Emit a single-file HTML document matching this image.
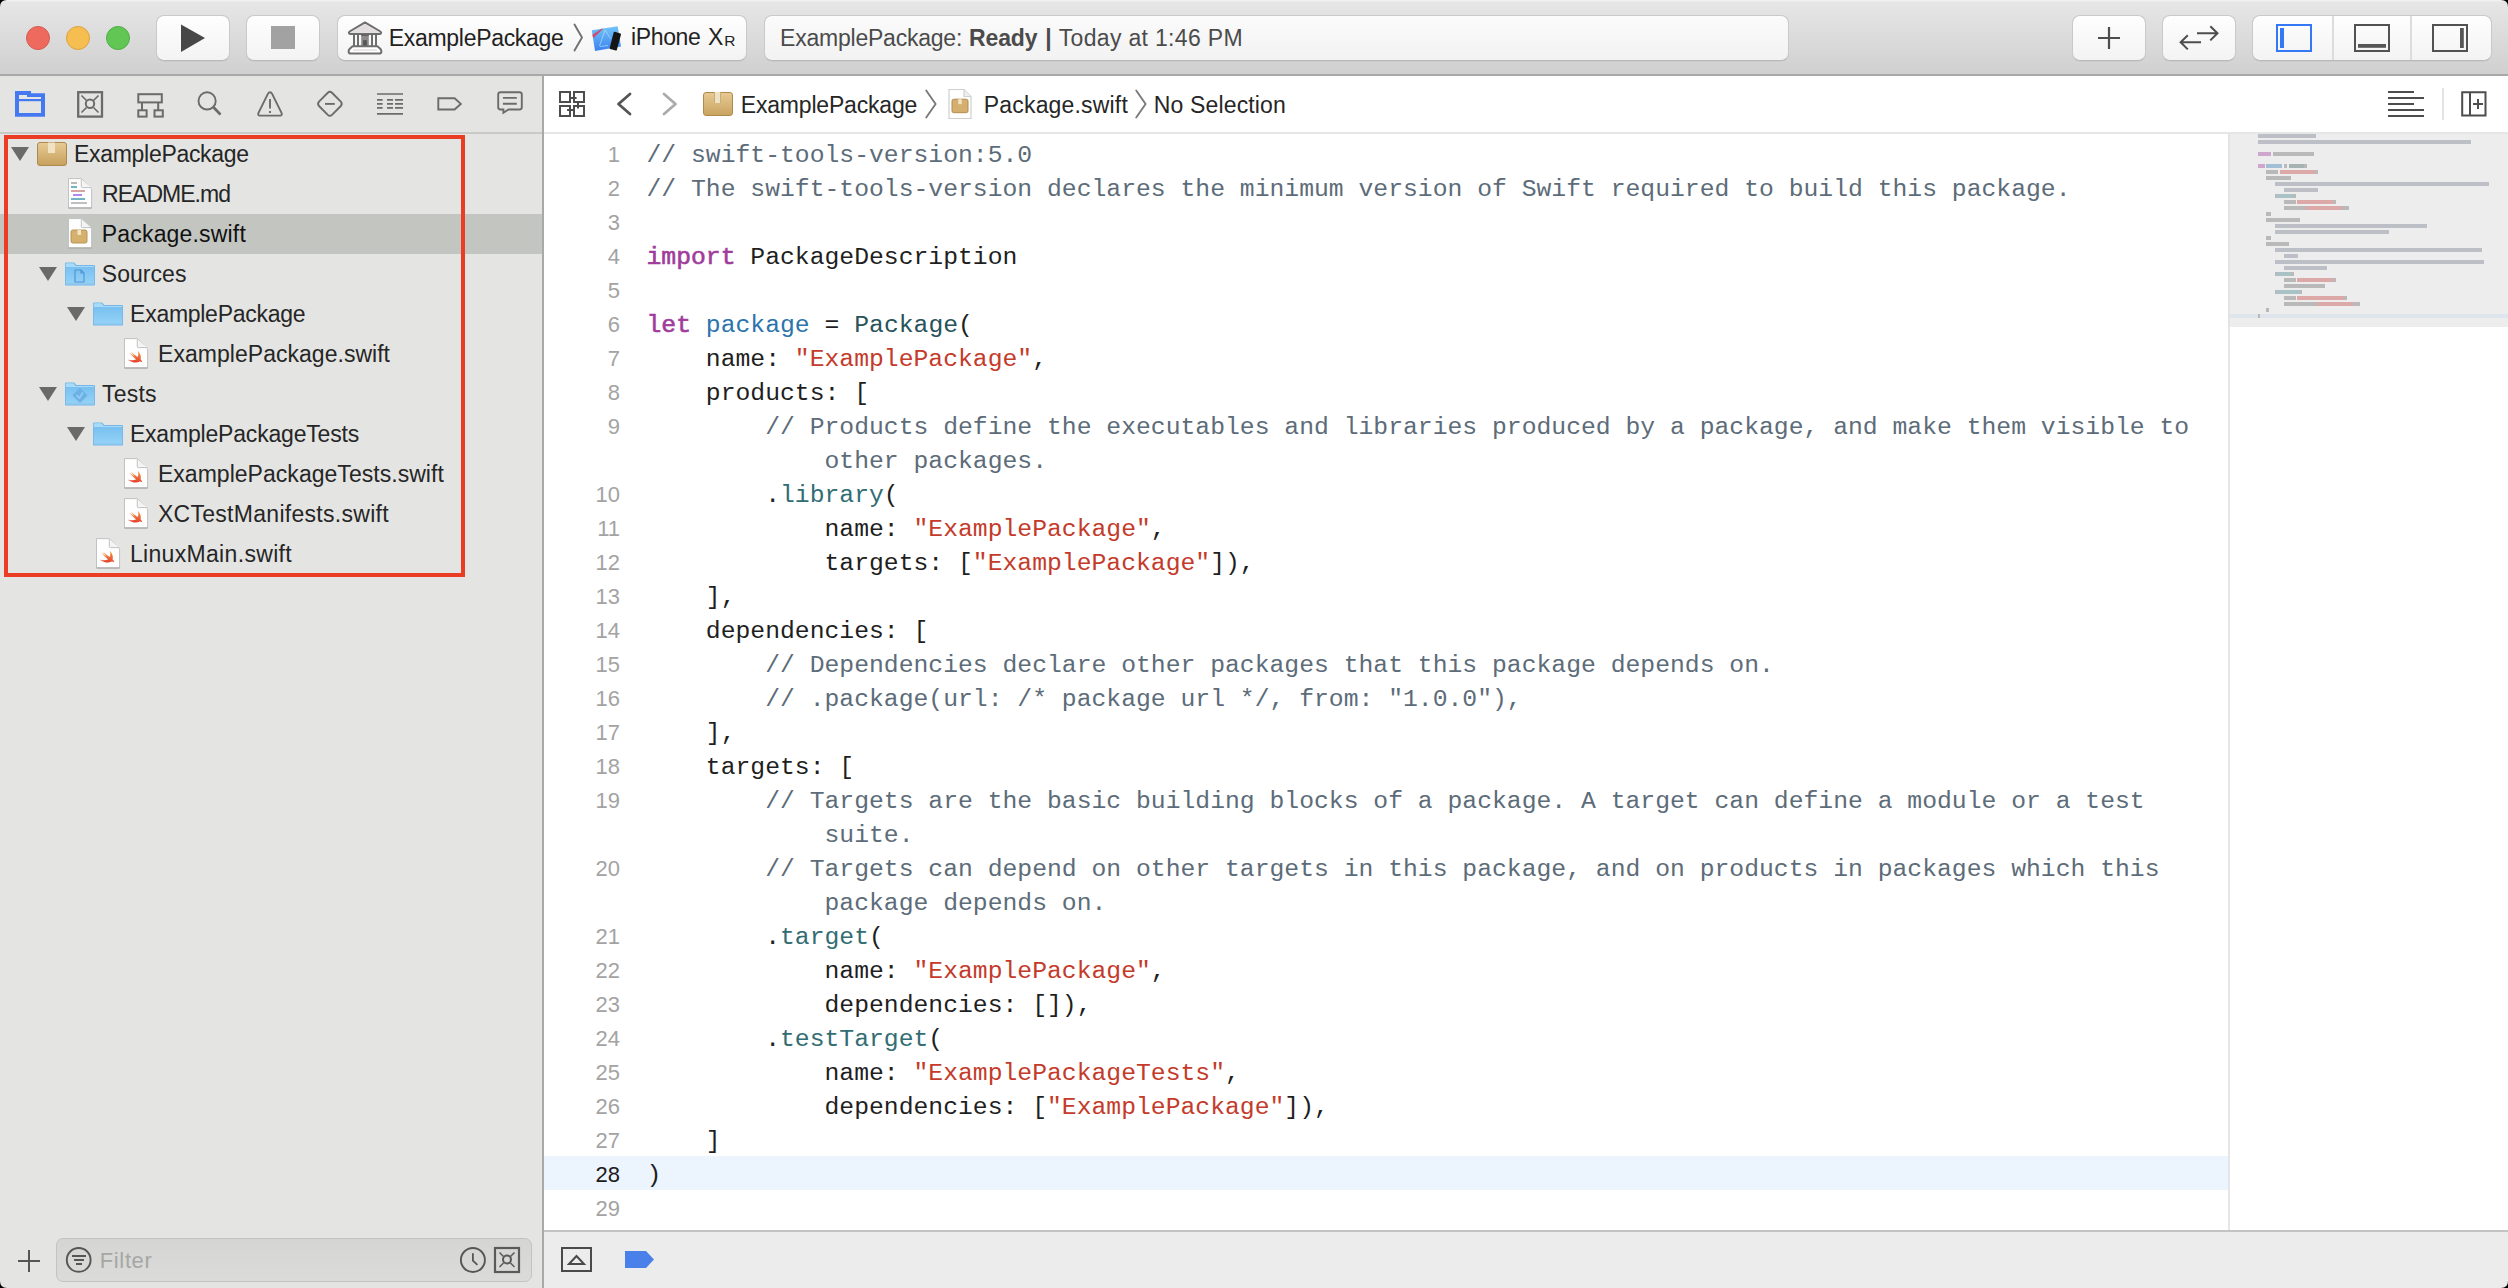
<!DOCTYPE html>
<html><head><meta charset="utf-8">
<style>
*{margin:0;padding:0;box-sizing:border-box}
html,body{width:2508px;height:1288px;overflow:hidden;background:#fff}
body{position:relative;font-family:"Liberation Sans",sans-serif;color:#262626}
.a{position:absolute}
/* toolbar */
#tb{position:absolute;left:0;top:0;width:2508px;height:76px;background:linear-gradient(#f5f5f5 0px,#e6e6e6 2px,#d0d0d0 74px);border-bottom:2px solid #a9a9a9}
.tl{position:absolute;width:24px;height:24px;border-radius:50%;top:26px}
.btn{position:absolute;top:15px;height:45.5px;border-radius:8px;background:linear-gradient(#fefefe,#f3f3f3);border:1px solid #c9c9c9;border-bottom-color:#b9b9b9;box-shadow:0 0.5px 0.5px rgba(0,0,0,0.08)}
.sans{position:absolute;white-space:nowrap;font-family:"Liberation Sans",sans-serif;line-height:1}
/* navigator */
#nav{position:absolute;left:0;top:76px;width:542px;height:1212px;background:#e4e4e2}
#navsep{position:absolute;left:542px;top:76px;width:2px;height:1212px;background:#a9a9a9}
#navtabs{position:absolute;left:0;top:76px;width:542px;height:58px;border-bottom:2px solid #c9c9c7}
.row{position:absolute;left:0;width:542px;height:40px}
.sel{background:#c3c5c0}
.nt{position:absolute;white-space:nowrap;font-size:23px;line-height:1;color:#262626}
.tri{position:absolute;width:0;height:0;border-left:9px solid transparent;border-right:9px solid transparent;border-top:14px solid #6b6b6b}
/* editor */
#jump{position:absolute;left:544px;top:76px;width:1964px;height:58px;background:#fff;border-bottom:2px solid #e6e6e6}
#editor{position:absolute;left:544px;top:134px;width:1964px;height:1096px;background:#fff}
.cr{position:absolute;white-space:pre;font-family:"Liberation Mono",monospace;font-size:24.72px;line-height:34px;height:34px;padding-top:2px}
.ln{position:absolute;left:560px;width:60px;text-align:right;font-family:"Liberation Sans",sans-serif;font-size:22px;line-height:34px;height:34px;color:#a3a3a3;padding-top:1.5px}
.ln.cur{color:#1a1a1a}
.com{color:#5d6c79}.kw{color:#a03c9b;-webkit-text-stroke:0.6px #a03c9b}.str{color:#c43b2b}.decl{color:#2c74ac}.type{color:#28535a}.fn{color:#326d74}.pl{color:#1f1f1f}
#curline{position:absolute;left:544px;top:1156px;width:1684px;height:34px;background:#ecf4fe}
#mmbg{position:absolute;left:2228px;top:134px;width:280px;height:193px;background:#ededed;border-left:2px solid #e3e3e3}
#mmcur{position:absolute;left:2230px;top:314px;width:278px;height:4px;background:#dfe5ed}
#mm i{position:absolute;height:4px;display:block}
#edsep{position:absolute;left:2228px;top:327px;width:2px;height:903px;background:#e6e6e6}
/* bottom */
#bot{position:absolute;left:544px;top:1230px;width:1964px;height:58px;background:#ececec;border-top:2px solid #c3c3c3}
#filter{position:absolute;left:56px;top:1238px;width:476px;height:44px;border-radius:7px;background:linear-gradient(#d5d5d3,#dbdbd9);border:1px solid #c3c3c1}
.ico{position:absolute;overflow:visible}
.corner{position:absolute;width:8px;height:8px}
</style></head><body>

<!-- toolbar -->
<div id="tb"></div>
<div class="tl" style="left:26px;background:#ee6a5f;border:1px solid #d65b4f"></div>
<div class="tl" style="left:66px;background:#f6be50;border:1px solid #dca23c"></div>
<div class="tl" style="left:106px;background:#62c655;border:1px solid #4fae44"></div>

<div class="btn" style="left:156px;width:74px"></div>
<svg class="ico" style="left:156px;top:16px" width="74" height="44"><path d="M25 8.5 L49 22 L25 36 Z" fill="#474747"/></svg>
<div class="btn" style="left:246px;width:74px"></div>
<div class="a" style="left:271px;top:26px;width:24px;height:23px;background:#a2a2a2"></div>
<div class="btn" style="left:337px;width:410px"></div>
<!-- bank icon -->
<svg class="ico" style="left:340px;top:15px" width="60" height="45" viewBox="0 0 60 45">
 <path d="M25 7.4 L39.6 16 Q41.6 17.3 41 18.2 Q40.6 18.9 39.4 18.9 H10.6 Q9.4 18.9 9 18.2 Q8.4 17.3 10.4 16 Z" fill="#e6e2e4" stroke="#6e6e6e" stroke-width="2" stroke-linejoin="round"/>
 <path d="M12.2 17.6 L25 10.2 L37.8 17.6 Z" fill="#e2dee0"/>
 <g fill="#6e6e6e"><rect x="13" y="19" width="2" height="13.2"/><rect x="17" y="19" width="2" height="13.2"/><rect x="31" y="19" width="2" height="13.2"/><rect x="35" y="19" width="2" height="13.2"/></g>
 <rect x="21.2" y="19.2" width="7.6" height="13.5" fill="#8d898b"/>
 <rect x="21.2" y="19.2" width="7.6" height="1.6" fill="#5e5e5e"/>
 <rect x="23.2" y="25.2" width="3.6" height="7.5" fill="#555"/>
 <path d="M12.6 31.2 H37.4 L40.2 33.8 Q41.4 35 41.4 36.4 Q41.4 38.5 39.3 38.5 H10.7 Q8.6 38.5 8.6 36.4 Q8.6 35 9.8 33.8 Z" fill="#fff" stroke="#6e6e6e" stroke-width="2" stroke-linejoin="round"/>
 <rect x="13" y="34.2" width="24" height="1.6" fill="#e6e2e4"/>
</svg>
<div class="sans" style="left:388.80px;top:26.53px;font-size:23px;letter-spacing:-0.308px;color:#222;">ExamplePackage</div>
<svg class="ico" style="left:572px;top:23px" width="12" height="30"><path d="M2.5 1.5 L10 14.5 L2.5 27.5" fill="none" stroke="#707070" stroke-width="1.9" stroke-linecap="round" stroke-linejoin="round"/></svg>
<!-- iphone/sim icon -->
<svg class="ico" style="left:585px;top:20px" width="45" height="36" viewBox="0 0 45 36">
 <defs><linearGradient id="bp" x1="0" y1="0" x2="0" y2="1"><stop offset="0" stop-color="#72c4f8"/><stop offset="1" stop-color="#3b82ef"/></linearGradient></defs>
 <path d="M6.8 10.3 L32.7 6.3 L36 26.6 L10 31 Z" fill="url(#bp)"/>
 <path d="M7.4 14.8 L16.2 8.9 L18.4 8.6 L8.2 18.2 Z" fill="#cf4a6c"/>
 <path d="M20 10 L25.5 18.5 M20 10 L14.5 26 M15 26.5 L23 25.5" stroke="#b5dcfb" stroke-width="0.7" fill="none"/>
 <path d="M28.7 12.2 Q29 11.6 29.8 11.8 L35.4 13.4 Q36.2 13.7 36 14.4 L31.8 30 Q31.6 30.7 30.8 30.5 L25.2 28.9 Q24.5 28.6 24.7 27.9 Z" fill="#151515"/>
</svg>
<div class="sans" style="left:631.00px;top:26.23px;font-size:23px;letter-spacing:-0.364px;color:#222;">iPhone</div><div class="sans" style="left:708.00px;top:26.23px;font-size:23px;letter-spacing:0.000px;color:#222;">X</div><div class="sans" style="left:724.20px;top:32.58px;font-size:15.5px;letter-spacing:0.000px;color:#222;">R</div>

<!-- activity view -->
<div class="btn" style="left:764px;width:1025px;background:linear-gradient(#fbfbfb,#f2f2f2)"></div>
<div class="sans" style="left:780.10px;top:26.83px;font-size:23px;letter-spacing:-0.227px;color:#4b4b4b;">ExamplePackage:</div><div class="sans" style="left:969.10px;top:26.83px;font-size:23px;letter-spacing:-0.159px;color:#4b4b4b;font-weight:bold;">Ready</div><div class="sans" style="left:1045.30px;top:26.83px;font-size:23px;letter-spacing:0.000px;color:#4b4b4b;font-weight:bold;">|</div><div class="sans" style="left:1058.80px;top:26.83px;font-size:23px;letter-spacing:0.320px;color:#4b4b4b;">Today at 1:46 PM</div>

<!-- right toolbar buttons -->
<div class="btn" style="left:2072px;width:74px"></div>
<svg class="ico" style="left:2072px;top:16px" width="74" height="44"><path d="M37 11 V33 M26 22 H48" stroke="#4d4d4d" stroke-width="2.2"/></svg>
<div class="btn" style="left:2162px;width:74px"></div>
<svg class="ico" style="left:2162px;top:16px" width="74" height="44"><g fill="none" stroke="#4d4d4d" stroke-width="2"><path d="M35 17.3 H55.5 M48.3 10.2 L55.5 17.3 L48.3 24.4"/><path d="M18.6 26.3 H39 M25.8 19.2 L18.6 26.3 L25.8 33.4"/></g></svg>
<div class="btn" style="left:2252px;width:240px"></div>
<div class="a" style="left:2332px;top:16px;width:2px;height:44px;background:#dcdcdc"></div>
<div class="a" style="left:2410px;top:16px;width:2px;height:44px;background:#dcdcdc"></div>
<svg class="ico" style="left:2276px;top:24px" width="36" height="28"><rect x="1" y="1" width="34" height="26" fill="none" stroke="#3478f6" stroke-width="2"/><rect x="4" y="4" width="4" height="20" fill="#3478f6"/></svg>
<svg class="ico" style="left:2354px;top:24px" width="36" height="28"><rect x="1" y="1" width="34" height="26" fill="none" stroke="#525252" stroke-width="2"/><rect x="4" y="20" width="28" height="3.8" fill="#565656"/></svg>
<svg class="ico" style="left:2432px;top:24px" width="36" height="28"><rect x="1" y="1" width="34" height="26" fill="none" stroke="#525252" stroke-width="2"/><rect x="28" y="4" width="3.8" height="20" fill="#565656"/></svg>

<!-- navigator -->
<div id="nav"></div>
<div id="navtabs"></div>
<div class="row sel" style="top:214px"></div>
<svg class="ico" style="left:11px;top:147px" width="18" height="14"><path d="M0 0 H18 L9 14 Z" fill="#6a6a6a"/></svg>
<svg class="ico" style="left:37px;top:142px" width="30" height="24" viewBox="0 0 30 24"><defs><linearGradient id="pg" x1="0" y1="0" x2="0" y2="1"><stop offset="0" stop-color="#e7cb96"/><stop offset="1" stop-color="#c7a05c"/></linearGradient></defs><rect x="0.5" y="0.5" width="29" height="23" rx="2.5" fill="url(#pg)" stroke="#af8a4d" stroke-width="1"/><rect x="11" y="0.5" width="7" height="10.5" fill="#f0e2c3"/></svg>
<div class="sans" style="left:74.00px;top:142.53px;font-size:23px;letter-spacing:-0.300px;color:#262626;">ExamplePackage</div>
<svg class="ico" style="left:67px;top:177px" width="26" height="32" viewBox="0 0 26 32"><path d="M1.5 1.6 H13.6 Q14.6 1.6 15.3 2.3 L23.9 10.9 Q24.6 11.6 24.6 12.6 V31 H1.5 Z" fill="#fefefe" stroke="#c2c2c2" stroke-width="1"/><path d="M1.5 31 H24.6" stroke="#ababab" stroke-width="1.3"/><path d="M14.3 2 V9.6 Q14.3 10.6 15.3 10.6 H24.2" fill="#f4f4f4" stroke="#c2c2c2" stroke-width="1"/><g stroke-width="1.6"><path d="M4 6 H10" stroke="#a8a8a8"/><path d="M4 10 H10" stroke="#4f9fb3"/><path d="M4 14 H18" stroke="#cf8d8d"/><path d="M6 18 H15" stroke="#9b6cf0"/><path d="M4 22 H18" stroke="#4f9fb3"/><path d="M4 26 H20" stroke="#b0b0b0"/></g></svg>
<div class="sans" style="left:102.00px;top:182.53px;font-size:23px;letter-spacing:-0.968px;color:#262626;">README.md</div>
<svg class="ico" style="left:67px;top:217px" width="26" height="32" viewBox="0 0 26 32"><path d="M1.5 1.6 H13.6 Q14.6 1.6 15.3 2.3 L23.9 10.9 Q24.6 11.6 24.6 12.6 V31 H1.5 Z" fill="#fefefe" stroke="#c2c2c2" stroke-width="1"/><path d="M1.5 31 H24.6" stroke="#ababab" stroke-width="1.3"/><path d="M14.3 2 V9.6 Q14.3 10.6 15.3 10.6 H24.2" fill="#f4f4f4" stroke="#c2c2c2" stroke-width="1"/><rect x="4" y="13" width="16" height="13" rx="1.8" fill="#d6b06d" stroke="#b38e50" stroke-width="0.9"/><rect x="10.5" y="13" width="3.5" height="5" fill="#f2e3c4"/></svg>
<div class="sans" style="left:101.80px;top:222.53px;font-size:23px;letter-spacing:0.175px;color:#111;">Package.swift</div>
<svg class="ico" style="left:39px;top:267px" width="18" height="14"><path d="M0 0 H18 L9 14 Z" fill="#6a6a6a"/></svg>
<svg class="ico" style="left:65px;top:262px" width="31" height="25" viewBox="0 0 31 25"><defs><linearGradient id="fb" x1="0" y1="0" x2="0" y2="1"><stop offset="0" stop-color="#79c0f0"/><stop offset="1" stop-color="#92d1f7"/></linearGradient></defs><path d="M1.2 0.4 H8.6 Q9.3 0.4 9.7 0.9 L11.3 3.1 H28.8 Q30 3.1 30 4.3 V22.4 Q30 23.6 28.8 23.6 H1.2 Q0 23.6 0 22.4 V1.6 Q0 0.4 1.2 0.4 Z" fill="#74b6e6"/><path d="M1.6 1.2 H8.4 L10.7 3.9 H28.4 Q29.2 3.9 29.2 4.7 V5.3 H0.8 V2 Q0.8 1.2 1.6 1.2 Z" fill="#a7dbfb"/><rect x="0.8" y="5.3" width="28.4" height="15.1" fill="url(#fb)"/><rect x="0.8" y="20.4" width="28.4" height="1.2" fill="#a3d9fa"/><rect x="0.8" y="21.6" width="28.4" height="1.2" fill="#89c9f3"/><path d="M10 8 H16 L19 11 V20 H10 Z" fill="none" stroke="#4e93d3" stroke-width="1.1"/><path d="M16 8 V11 H19" fill="none" stroke="#4e93d3" stroke-width="1.1"/></svg>
<div class="sans" style="left:101.80px;top:262.53px;font-size:23px;letter-spacing:0.037px;color:#262626;">Sources</div>
<svg class="ico" style="left:67px;top:307px" width="18" height="14"><path d="M0 0 H18 L9 14 Z" fill="#6a6a6a"/></svg>
<svg class="ico" style="left:93px;top:302px" width="31" height="25" viewBox="0 0 31 25"><defs><linearGradient id="fb" x1="0" y1="0" x2="0" y2="1"><stop offset="0" stop-color="#79c0f0"/><stop offset="1" stop-color="#92d1f7"/></linearGradient></defs><path d="M1.2 0.4 H8.6 Q9.3 0.4 9.7 0.9 L11.3 3.1 H28.8 Q30 3.1 30 4.3 V22.4 Q30 23.6 28.8 23.6 H1.2 Q0 23.6 0 22.4 V1.6 Q0 0.4 1.2 0.4 Z" fill="#74b6e6"/><path d="M1.6 1.2 H8.4 L10.7 3.9 H28.4 Q29.2 3.9 29.2 4.7 V5.3 H0.8 V2 Q0.8 1.2 1.6 1.2 Z" fill="#a7dbfb"/><rect x="0.8" y="5.3" width="28.4" height="15.1" fill="url(#fb)"/><rect x="0.8" y="20.4" width="28.4" height="1.2" fill="#a3d9fa"/><rect x="0.8" y="21.6" width="28.4" height="1.2" fill="#89c9f3"/></svg>
<div class="sans" style="left:130.10px;top:302.53px;font-size:23px;letter-spacing:-0.277px;color:#262626;">ExamplePackage</div>
<svg class="ico" style="left:123px;top:337px" width="26" height="32" viewBox="0 0 26 32"><path d="M1.5 1.6 H13.6 Q14.6 1.6 15.3 2.3 L23.9 10.9 Q24.6 11.6 24.6 12.6 V31 H1.5 Z" fill="#fefefe" stroke="#c2c2c2" stroke-width="1"/><path d="M1.5 31 H24.6" stroke="#ababab" stroke-width="1.3"/><path d="M14.3 2 V9.6 Q14.3 10.6 15.3 10.6 H24.2" fill="#f4f4f4" stroke="#c2c2c2" stroke-width="1"/><defs><linearGradient id="sg" x1="0" y1="0" x2="0" y2="1"><stop offset="0" stop-color="#f5a24c"/><stop offset="1" stop-color="#e63e2c"/></linearGradient></defs><g transform="translate(-0.8,-0.6) scale(1.07)"><path d="M14.5 13.5 C17 16 18 19 17.2 21.5 C18.3 22.5 18.7 23.5 18.8 24.5 C18 23.6 17 23.3 16.3 23.5 C13.5 25 9.5 24.8 5 21.5 C8 22.8 11 22.6 13 21.3 C10.5 19.5 8.3 17.3 6.6 15 C8.4 16.6 10.2 17.9 11.7 18.9 C10.3 17.4 9 15.6 7.9 13.9 C10 16 12.5 18 14.4 19.2 C15.3 17.3 15.3 15.3 14.5 13.5 Z" fill="url(#sg)"/></g></svg>
<div class="sans" style="left:158.10px;top:342.53px;font-size:23px;letter-spacing:0.027px;color:#262626;">ExamplePackage.swift</div>
<svg class="ico" style="left:39px;top:387px" width="18" height="14"><path d="M0 0 H18 L9 14 Z" fill="#6a6a6a"/></svg>
<svg class="ico" style="left:65px;top:382px" width="31" height="25" viewBox="0 0 31 25"><defs><linearGradient id="fb" x1="0" y1="0" x2="0" y2="1"><stop offset="0" stop-color="#79c0f0"/><stop offset="1" stop-color="#92d1f7"/></linearGradient></defs><path d="M1.2 0.4 H8.6 Q9.3 0.4 9.7 0.9 L11.3 3.1 H28.8 Q30 3.1 30 4.3 V22.4 Q30 23.6 28.8 23.6 H1.2 Q0 23.6 0 22.4 V1.6 Q0 0.4 1.2 0.4 Z" fill="#74b6e6"/><path d="M1.6 1.2 H8.4 L10.7 3.9 H28.4 Q29.2 3.9 29.2 4.7 V5.3 H0.8 V2 Q0.8 1.2 1.6 1.2 Z" fill="#a7dbfb"/><rect x="0.8" y="5.3" width="28.4" height="15.1" fill="url(#fb)"/><rect x="0.8" y="20.4" width="28.4" height="1.2" fill="#a3d9fa"/><rect x="0.8" y="21.6" width="28.4" height="1.2" fill="#89c9f3"/><path d="M15 6.6 L21.4 13 Q21.8 13.4 21.4 13.8 L15.4 19.8 Q15 20.2 14.6 19.8 L8.6 13.8 Q8.2 13.4 8.6 13 Z" fill="#6eb1e3" stroke="#6eb1e3" stroke-width="1.2" stroke-linejoin="round"/><path d="M11.6 13.2 L14.5 16 L17.8 10.6" fill="none" stroke="#8ccdf6" stroke-width="1.9"/></svg>
<div class="sans" style="left:102.00px;top:382.53px;font-size:23px;letter-spacing:0.230px;color:#262626;">Tests</div>
<svg class="ico" style="left:67px;top:427px" width="18" height="14"><path d="M0 0 H18 L9 14 Z" fill="#6a6a6a"/></svg>
<svg class="ico" style="left:93px;top:422px" width="31" height="25" viewBox="0 0 31 25"><defs><linearGradient id="fb" x1="0" y1="0" x2="0" y2="1"><stop offset="0" stop-color="#79c0f0"/><stop offset="1" stop-color="#92d1f7"/></linearGradient></defs><path d="M1.2 0.4 H8.6 Q9.3 0.4 9.7 0.9 L11.3 3.1 H28.8 Q30 3.1 30 4.3 V22.4 Q30 23.6 28.8 23.6 H1.2 Q0 23.6 0 22.4 V1.6 Q0 0.4 1.2 0.4 Z" fill="#74b6e6"/><path d="M1.6 1.2 H8.4 L10.7 3.9 H28.4 Q29.2 3.9 29.2 4.7 V5.3 H0.8 V2 Q0.8 1.2 1.6 1.2 Z" fill="#a7dbfb"/><rect x="0.8" y="5.3" width="28.4" height="15.1" fill="url(#fb)"/><rect x="0.8" y="20.4" width="28.4" height="1.2" fill="#a3d9fa"/><rect x="0.8" y="21.6" width="28.4" height="1.2" fill="#89c9f3"/></svg>
<div class="sans" style="left:129.90px;top:422.53px;font-size:23px;letter-spacing:-0.188px;color:#262626;">ExamplePackageTests</div>
<svg class="ico" style="left:123px;top:457px" width="26" height="32" viewBox="0 0 26 32"><path d="M1.5 1.6 H13.6 Q14.6 1.6 15.3 2.3 L23.9 10.9 Q24.6 11.6 24.6 12.6 V31 H1.5 Z" fill="#fefefe" stroke="#c2c2c2" stroke-width="1"/><path d="M1.5 31 H24.6" stroke="#ababab" stroke-width="1.3"/><path d="M14.3 2 V9.6 Q14.3 10.6 15.3 10.6 H24.2" fill="#f4f4f4" stroke="#c2c2c2" stroke-width="1"/><defs><linearGradient id="sg" x1="0" y1="0" x2="0" y2="1"><stop offset="0" stop-color="#f5a24c"/><stop offset="1" stop-color="#e63e2c"/></linearGradient></defs><g transform="translate(-0.8,-0.6) scale(1.07)"><path d="M14.5 13.5 C17 16 18 19 17.2 21.5 C18.3 22.5 18.7 23.5 18.8 24.5 C18 23.6 17 23.3 16.3 23.5 C13.5 25 9.5 24.8 5 21.5 C8 22.8 11 22.6 13 21.3 C10.5 19.5 8.3 17.3 6.6 15 C8.4 16.6 10.2 17.9 11.7 18.9 C10.3 17.4 9 15.6 7.9 13.9 C10 16 12.5 18 14.4 19.2 C15.3 17.3 15.3 15.3 14.5 13.5 Z" fill="url(#sg)"/></g></svg>
<div class="sans" style="left:157.90px;top:462.53px;font-size:23px;letter-spacing:0.035px;color:#262626;">ExamplePackageTests.swift</div>
<svg class="ico" style="left:123px;top:497px" width="26" height="32" viewBox="0 0 26 32"><path d="M1.5 1.6 H13.6 Q14.6 1.6 15.3 2.3 L23.9 10.9 Q24.6 11.6 24.6 12.6 V31 H1.5 Z" fill="#fefefe" stroke="#c2c2c2" stroke-width="1"/><path d="M1.5 31 H24.6" stroke="#ababab" stroke-width="1.3"/><path d="M14.3 2 V9.6 Q14.3 10.6 15.3 10.6 H24.2" fill="#f4f4f4" stroke="#c2c2c2" stroke-width="1"/><defs><linearGradient id="sg" x1="0" y1="0" x2="0" y2="1"><stop offset="0" stop-color="#f5a24c"/><stop offset="1" stop-color="#e63e2c"/></linearGradient></defs><g transform="translate(-0.8,-0.6) scale(1.07)"><path d="M14.5 13.5 C17 16 18 19 17.2 21.5 C18.3 22.5 18.7 23.5 18.8 24.5 C18 23.6 17 23.3 16.3 23.5 C13.5 25 9.5 24.8 5 21.5 C8 22.8 11 22.6 13 21.3 C10.5 19.5 8.3 17.3 6.6 15 C8.4 16.6 10.2 17.9 11.7 18.9 C10.3 17.4 9 15.6 7.9 13.9 C10 16 12.5 18 14.4 19.2 C15.3 17.3 15.3 15.3 14.5 13.5 Z" fill="url(#sg)"/></g></svg>
<div class="sans" style="left:157.90px;top:502.53px;font-size:23px;letter-spacing:0.292px;color:#262626;">XCTestManifests.swift</div>
<svg class="ico" style="left:95px;top:537px" width="26" height="32" viewBox="0 0 26 32"><path d="M1.5 1.6 H13.6 Q14.6 1.6 15.3 2.3 L23.9 10.9 Q24.6 11.6 24.6 12.6 V31 H1.5 Z" fill="#fefefe" stroke="#c2c2c2" stroke-width="1"/><path d="M1.5 31 H24.6" stroke="#ababab" stroke-width="1.3"/><path d="M14.3 2 V9.6 Q14.3 10.6 15.3 10.6 H24.2" fill="#f4f4f4" stroke="#c2c2c2" stroke-width="1"/><defs><linearGradient id="sg" x1="0" y1="0" x2="0" y2="1"><stop offset="0" stop-color="#f5a24c"/><stop offset="1" stop-color="#e63e2c"/></linearGradient></defs><g transform="translate(-0.8,-0.6) scale(1.07)"><path d="M14.5 13.5 C17 16 18 19 17.2 21.5 C18.3 22.5 18.7 23.5 18.8 24.5 C18 23.6 17 23.3 16.3 23.5 C13.5 25 9.5 24.8 5 21.5 C8 22.8 11 22.6 13 21.3 C10.5 19.5 8.3 17.3 6.6 15 C8.4 16.6 10.2 17.9 11.7 18.9 C10.3 17.4 9 15.6 7.9 13.9 C10 16 12.5 18 14.4 19.2 C15.3 17.3 15.3 15.3 14.5 13.5 Z" fill="url(#sg)"/></g></svg>
<div class="sans" style="left:129.90px;top:542.53px;font-size:23px;letter-spacing:0.327px;color:#262626;">LinuxMain.swift</div>

<!-- navigator tab icons -->
<svg class="ico" style="left:0;top:76px" width="542" height="56" viewBox="0 0 542 56">
 <!-- folder (blue) -->
 <path d="M15 15 H31 V17.2 H45 V40.8 H15 Z" fill="#4579f2"/>
 <path d="M19 19 H27 V21 H41 V23 H19 Z" fill="#e4e4e2"/>
 <rect x="19" y="25.2" width="22" height="11.8" fill="#e4e4e2"/>
 <g fill="none" stroke="#6b6b6b" stroke-width="2">
  <!-- source control -->
  <rect x="78.2" y="16.2" width="23.8" height="24.4" stroke-width="2.3"/>
  <circle cx="90" cy="27.8" r="4.2"/>
  <path d="M81.5 19.5 L86.5 24.5 M98.5 19.5 L93.5 24.5 M81.5 36.5 L86.5 31.5 M98.5 36.5 L93.5 31.5" stroke-width="1.6"/>
  <!-- hierarchy -->
  <rect x="138.3" y="18.2" width="23.5" height="8.2"/>
  <rect x="138.3" y="34.3" width="8.3" height="6.3"/><rect x="154.5" y="34.3" width="8.3" height="6.3"/>
  <path d="M142 26.4 V34.3 M158.2 26.4 V34.3"/>
  <!-- search -->
  <circle cx="207.1" cy="24.9" r="8.6" stroke-width="1.9"/>
  <path d="M213.5 31.2 L220.5 38.6" stroke-width="2.8"/>
  <!-- warning -->
  <path d="M270 16.2 Q271.2 16.2 272 17.6 L281.5 36.8 Q282.6 39.6 280 39.6 H260 Q257.4 39.6 258.5 36.8 L268 17.6 Q268.8 16.2 270 16.2 Z" stroke-width="1.9"/>
  <path d="M270 23 V32.5" stroke-width="1.9"/><path d="M270 35 V37" stroke-width="1.9"/>
  <!-- test diamond -->
  <path d="M327.8 16.8 Q329.9 14.9 332 16.8 L340.8 25.7 Q342.7 27.9 340.8 30 L332 38.9 Q329.9 40.8 327.8 38.9 L319 30 Q317.1 27.9 319 25.7 Z" stroke-width="1.9"/>
  <path d="M325 27.9 H334.8" stroke-width="1.9"/>
  <!-- debug -->
  <path d="M377 18 H403 M377 37.8 H403" stroke-width="1.7"/>
  <path d="M377 23.9 H382.6 M387 23.9 H393 M395 23.9 H403 M377 27.8 H382.6 M387 27.8 H393 M395 27.8 H403 M377 31.8 H382.6 M387 31.8 H393 M395 31.8 H403" stroke-width="1.7"/>
  <!-- breakpoint -->
  <path d="M438.3 22.2 H454.6 L460.8 27.9 L454.6 33.5 H438.3 Z" stroke-width="1.9"/>
  <!-- report -->
  <path d="M500.5 16.2 H519.5 Q521.8 16.2 521.8 18.5 V31.3 Q521.8 33.5 519.5 33.5 H508.5 L503.4 36.8 V33.5 H500.5 Q498.2 33.5 498.2 31.3 V18.5 Q498.2 16.2 500.5 16.2 Z" stroke-width="1.9"/>
  <path d="M502.9 21.9 H516.8 M502.9 27.8 H516.8" stroke-width="1.9"/>
 </g>
</svg>

<div id="navsep"></div>

<!-- red highlight box -->
<div class="a" style="left:4px;top:135px;width:461px;height:442px;border:4px solid #ea3d23"></div>

<!-- filter bar -->
<svg class="ico" style="left:16px;top:1248px" width="26" height="26"><path d="M13 2 V24 M2 13 H24" stroke="#555" stroke-width="2"/></svg>
<div id="filter"></div>
<svg class="ico" style="left:64px;top:1246px" width="30" height="30"><g fill="none" stroke="#555753" stroke-width="1.9"><circle cx="14.7" cy="13.9" r="11.9"/><path d="M8 9.9 H22 M10 14 H20 M12 18 H18" stroke-width="2"/></g></svg>
<div class="sans" style="left:99.80px;top:1249.88px;font-size:22px;letter-spacing:0.623px;color:#a6a7a4;">Filter</div>
<svg class="ico" style="left:458px;top:1246px" width="30" height="30"><g fill="none" stroke="#555753" stroke-width="1.9"><circle cx="14.9" cy="14" r="12"/><path d="M14.9 7.2 V14.6 L19.4 18.8" stroke-width="1.8"/></g></svg>
<svg class="ico" style="left:493px;top:1246px" width="28" height="28"><g fill="none" stroke="#5a5a5a" stroke-width="2"><rect x="2" y="2" width="24" height="24" stroke-width="2.2"/><circle cx="14" cy="13.5" r="4"/><path d="M6.5 6.5 L10.5 10.5 M21.5 6.5 L17.5 10.5 M6.5 21 L10.5 17 M21.5 21 L17.5 17" stroke-width="1.5"/></g></svg>

<!-- editor -->
<div id="jump"></div>
<div id="editor"></div>
<div id="curline"></div>
<div id="mmbg"></div>
<div id="mmcur"></div>
<div id="mm">
<i style="left:2258px;top:134px;width:58px;background:#bcc0c6"></i>
<i style="left:2258px;top:140px;width:213px;background:#bcc0c6"></i>
<i style="left:2258px;top:152px;width:13px;background:#cfa6cc"></i>
<i style="left:2273px;top:152px;width:41px;background:#b9b9b9"></i>
<i style="left:2258px;top:164px;width:7px;background:#cfa6cc"></i>
<i style="left:2266px;top:164px;width:16px;background:#a1bfd5"></i>
<i style="left:2284px;top:164px;width:3px;background:#b9b9b9"></i>
<i style="left:2289px;top:164px;width:16px;background:#a5b3b3"></i>
<i style="left:2304px;top:164px;width:3px;background:#b9b9b9"></i>
<i style="left:2266px;top:170px;width:12px;background:#b9b9b9"></i>
<i style="left:2280px;top:170px;width:36px;background:#dca8a8"></i>
<i style="left:2315px;top:170px;width:3px;background:#b9b9b9"></i>
<i style="left:2266px;top:176px;width:25px;background:#b9b9b9"></i>
<i style="left:2275px;top:182px;width:214px;background:#bcc0c6"></i>
<i style="left:2284px;top:188px;width:34px;background:#bcc0c6"></i>
<i style="left:2275px;top:194px;width:3px;background:#b9b9b9"></i>
<i style="left:2277px;top:194px;width:17px;background:#a9c2c5"></i>
<i style="left:2293px;top:194px;width:3px;background:#b9b9b9"></i>
<i style="left:2284px;top:200px;width:12px;background:#b9b9b9"></i>
<i style="left:2297px;top:200px;width:36px;background:#dca8a8"></i>
<i style="left:2333px;top:200px;width:3px;background:#b9b9b9"></i>
<i style="left:2284px;top:206px;width:23px;background:#b9b9b9"></i>
<i style="left:2306px;top:206px;width:36px;background:#dca8a8"></i>
<i style="left:2342px;top:206px;width:7px;background:#b9b9b9"></i>
<i style="left:2266px;top:212px;width:5px;background:#b9b9b9"></i>
<i style="left:2266px;top:218px;width:34px;background:#b9b9b9"></i>
<i style="left:2275px;top:224px;width:152px;background:#bcc0c6"></i>
<i style="left:2275px;top:230px;width:114px;background:#bcc0c6"></i>
<i style="left:2266px;top:236px;width:5px;background:#b9b9b9"></i>
<i style="left:2266px;top:242px;width:23px;background:#b9b9b9"></i>
<i style="left:2275px;top:248px;width:207px;background:#bcc0c6"></i>
<i style="left:2284px;top:254px;width:14px;background:#bcc0c6"></i>
<i style="left:2275px;top:260px;width:209px;background:#bcc0c6"></i>
<i style="left:2284px;top:266px;width:43px;background:#bcc0c6"></i>
<i style="left:2275px;top:272px;width:3px;background:#b9b9b9"></i>
<i style="left:2277px;top:272px;width:14px;background:#a9c2c5"></i>
<i style="left:2291px;top:272px;width:3px;background:#b9b9b9"></i>
<i style="left:2284px;top:278px;width:12px;background:#b9b9b9"></i>
<i style="left:2297px;top:278px;width:36px;background:#dca8a8"></i>
<i style="left:2333px;top:278px;width:3px;background:#b9b9b9"></i>
<i style="left:2284px;top:284px;width:41px;background:#b9b9b9"></i>
<i style="left:2275px;top:290px;width:3px;background:#b9b9b9"></i>
<i style="left:2277px;top:290px;width:23px;background:#a9c2c5"></i>
<i style="left:2300px;top:290px;width:2px;background:#b9b9b9"></i>
<i style="left:2284px;top:296px;width:12px;background:#b9b9b9"></i>
<i style="left:2297px;top:296px;width:48px;background:#dca8a8"></i>
<i style="left:2344px;top:296px;width:3px;background:#b9b9b9"></i>
<i style="left:2284px;top:302px;width:34px;background:#b9b9b9"></i>
<i style="left:2317px;top:302px;width:36px;background:#dca8a8"></i>
<i style="left:2353px;top:302px;width:7px;background:#b9b9b9"></i>
<i style="left:2266px;top:308px;width:3px;background:#b9b9b9"></i>
<i style="left:2258px;top:314px;width:2px;background:#b9b9b9"></i>
</div>
<div id="edsep"></div>
<div class="ln" style="top:136px">1</div>
<div class="ln" style="top:170px">2</div>
<div class="ln" style="top:204px">3</div>
<div class="ln" style="top:238px">4</div>
<div class="ln" style="top:272px">5</div>
<div class="ln" style="top:306px">6</div>
<div class="ln" style="top:340px">7</div>
<div class="ln" style="top:374px">8</div>
<div class="ln" style="top:408px">9</div>
<div class="ln" style="top:476px">10</div>
<div class="ln" style="top:510px">11</div>
<div class="ln" style="top:544px">12</div>
<div class="ln" style="top:578px">13</div>
<div class="ln" style="top:612px">14</div>
<div class="ln" style="top:646px">15</div>
<div class="ln" style="top:680px">16</div>
<div class="ln" style="top:714px">17</div>
<div class="ln" style="top:748px">18</div>
<div class="ln" style="top:782px">19</div>
<div class="ln" style="top:850px">20</div>
<div class="ln" style="top:918px">21</div>
<div class="ln" style="top:952px">22</div>
<div class="ln" style="top:986px">23</div>
<div class="ln" style="top:1020px">24</div>
<div class="ln" style="top:1054px">25</div>
<div class="ln" style="top:1088px">26</div>
<div class="ln" style="top:1122px">27</div>
<div class="ln cur" style="top:1156px">28</div>
<div class="ln" style="top:1190px">29</div>
<div class="cr" style="top:136px;left:646.50px"><span class="com">// swift-tools-version:5.0</span></div>
<div class="cr" style="top:170px;left:646.50px"><span class="com">// The swift-tools-version declares the minimum version of Swift required to build this package.</span></div>
<div class="cr" style="top:238px;left:646.50px"><span class="kw">import</span><span class="pl"> PackageDescription</span></div>
<div class="cr" style="top:306px;left:646.50px"><span class="kw">let</span><span class="pl"> </span><span class="decl">package</span><span class="pl"> = </span><span class="type">Package</span><span class="pl">(</span></div>
<div class="cr" style="top:340px;left:705.84px"><span class="pl">name: </span><span class="str">&quot;ExamplePackage&quot;</span><span class="pl">,</span></div>
<div class="cr" style="top:374px;left:705.84px"><span class="pl">products: [</span></div>
<div class="cr" style="top:408px;left:765.17px"><span class="com">// Products define the executables and libraries produced by a package, and make them visible to</span></div>
<div class="cr" style="top:442px;left:824.51px"><span class="com">other packages.</span></div>
<div class="cr" style="top:476px;left:765.17px"><span class="pl">.</span><span class="fn">library</span><span class="pl">(</span></div>
<div class="cr" style="top:510px;left:824.51px"><span class="pl">name: </span><span class="str">&quot;ExamplePackage&quot;</span><span class="pl">,</span></div>
<div class="cr" style="top:544px;left:824.51px"><span class="pl">targets: [</span><span class="str">&quot;ExamplePackage&quot;</span><span class="pl">]),</span></div>
<div class="cr" style="top:578px;left:705.84px"><span class="pl">],</span></div>
<div class="cr" style="top:612px;left:705.84px"><span class="pl">dependencies: [</span></div>
<div class="cr" style="top:646px;left:765.17px"><span class="com">// Dependencies declare other packages that this package depends on.</span></div>
<div class="cr" style="top:680px;left:765.17px"><span class="com">// .package(url: /* package url */, from: &quot;1.0.0&quot;),</span></div>
<div class="cr" style="top:714px;left:705.84px"><span class="pl">],</span></div>
<div class="cr" style="top:748px;left:705.84px"><span class="pl">targets: [</span></div>
<div class="cr" style="top:782px;left:765.17px"><span class="com">// Targets are the basic building blocks of a package. A target can define a module or a test</span></div>
<div class="cr" style="top:816px;left:824.51px"><span class="com">suite.</span></div>
<div class="cr" style="top:850px;left:765.17px"><span class="com">// Targets can depend on other targets in this package, and on products in packages which this</span></div>
<div class="cr" style="top:884px;left:824.51px"><span class="com">package depends on.</span></div>
<div class="cr" style="top:918px;left:765.17px"><span class="pl">.</span><span class="fn">target</span><span class="pl">(</span></div>
<div class="cr" style="top:952px;left:824.51px"><span class="pl">name: </span><span class="str">&quot;ExamplePackage&quot;</span><span class="pl">,</span></div>
<div class="cr" style="top:986px;left:824.51px"><span class="pl">dependencies: []),</span></div>
<div class="cr" style="top:1020px;left:765.17px"><span class="pl">.</span><span class="fn">testTarget</span><span class="pl">(</span></div>
<div class="cr" style="top:1054px;left:824.51px"><span class="pl">name: </span><span class="str">&quot;ExamplePackageTests&quot;</span><span class="pl">,</span></div>
<div class="cr" style="top:1088px;left:824.51px"><span class="pl">dependencies: [</span><span class="str">&quot;ExamplePackage&quot;</span><span class="pl">]),</span></div>
<div class="cr" style="top:1122px;left:705.84px"><span class="pl">]</span></div>
<div class="cr" style="top:1156px;left:646.50px"><span class="pl">)</span></div>

<!-- jump bar -->
<svg class="ico" style="left:544px;top:76px" width="200" height="56" viewBox="0 0 200 56">
 <g fill="none" stroke="#4d4d4d" stroke-width="2">
  <rect x="16" y="16" width="10" height="10"/><rect x="30" y="16" width="10" height="10"/>
  <rect x="16" y="30" width="10" height="10"/><rect x="30" y="30" width="10" height="10"/>
  <path d="M26 22 H32.6 M34 26 V32.4 M23.1 33.9 H29.6"/>
  <path d="M86 18 L74.5 28 L86 38" stroke-width="2.8" stroke-linecap="round" stroke-linejoin="round" stroke="#555"/>
  <path d="M120 18 L131.5 28 L120 38" stroke="#ababab" stroke-width="2.8" stroke-linecap="round" stroke-linejoin="round"/>
 </g>
</svg>
<!-- package icon jump -->
<div class="a" style="left:703px;top:92px;width:30px;height:24px;border-radius:3px;background:linear-gradient(#e6c992,#c9a461);border:1px solid #b08a4c"></div>
<div class="a" style="left:714px;top:92px;width:7px;height:11px;background:#efe1c3;border-left:1px solid #c9ad78;border-right:1px solid #c9ad78"></div>
<div class="sans" style="left:740.80px;top:93.83px;font-size:23px;letter-spacing:-0.192px;color:#262626;">ExamplePackage</div>
<svg class="ico" style="left:924px;top:89px" width="14" height="31"><path d="M2.2 1.5 L11.6 15 L2.2 28.5" fill="none" stroke="#7a7a7a" stroke-width="1.9" stroke-linecap="round" stroke-linejoin="round"/></svg>
<!-- file icon jump -->
<svg class="ico" style="left:947px;top:88px" width="26" height="32" viewBox="0 0 26 32">
 <path d="M2 1.5 H17 L24 8.5 V30.5 H2 Z" fill="#fff" stroke="#cfcfcf" stroke-width="1.2"/>
 <path d="M17 1.5 V8.5 H24" fill="#eee" stroke="#cfcfcf" stroke-width="1.2"/>
 <rect x="5" y="11.2" width="16" height="13.5" rx="1.8" fill="#d4af6d" stroke="#b28d4f" stroke-width="1"/>
 <rect x="11.2" y="11.2" width="3.6" height="5" fill="#f0e2c4"/>
</svg>
<div class="sans" style="left:983.80px;top:93.83px;font-size:23px;letter-spacing:0.175px;color:#262626;">Package.swift</div>
<svg class="ico" style="left:1134px;top:89px" width="14" height="31"><path d="M2.2 1.5 L11.6 15 L2.2 28.5" fill="none" stroke="#7a7a7a" stroke-width="1.9" stroke-linecap="round" stroke-linejoin="round"/></svg>
<div class="sans" style="left:1153.80px;top:93.83px;font-size:23px;letter-spacing:0.145px;color:#262626;">No Selection</div>
<svg class="ico" style="left:2386px;top:88px" width="120" height="34" viewBox="0 0 120 34">
 <g stroke="#4d4d4d" stroke-width="2" fill="none">
  <path d="M2 4 H28 M2 10 H38 M2 16 H28 M2 22 H38 M2 28 H38"/>
  <path d="M76.2 4.2 H99.5 V27.6 H76.2 Z M84 4.2 V27.6 M92 11 V21 M87 16 H97"/>
 </g>
 <rect x="56" y="0" width="2" height="32" fill="#e3e3e3"/>
</svg>

<!-- bottom bar -->
<div id="bot"></div>
<svg class="ico" style="left:560px;top:1247px" width="32" height="26"><g fill="none" stroke="#4a4a4a" stroke-width="2"><rect x="2" y="1" width="29" height="23"/><path d="M9 17 L16.5 9 L24 17 Z"/></g></svg>
<svg class="ico" style="left:624px;top:1250px" width="32" height="20"><path d="M1 1 H22 L30 9.5 L22 18 H1 Z" fill="#4a80ea"/></svg>

<!-- window corners -->
<svg class="ico" style="left:0;top:0" width="8" height="8"><path d="M0 0 H7 Q0 0 0 7 Z" fill="#000"/></svg>
<svg class="ico" style="left:2500px;top:0" width="8" height="8"><path d="M8 0 H1 Q8 0 8 7 Z" fill="#000"/></svg>
<svg class="ico" style="left:0;top:1280px" width="8" height="8"><path d="M0 8 H7 Q0 8 0 1 Z" fill="#000"/></svg>
<svg class="ico" style="left:2500px;top:1280px" width="8" height="8"><path d="M8 8 H1 Q8 8 8 1 Z" fill="#000"/></svg>
</body></html>
